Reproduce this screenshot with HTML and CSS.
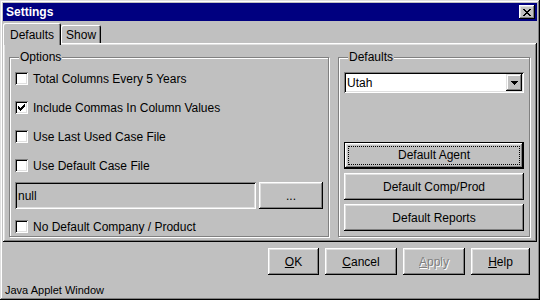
FILE: index.html
```html
<!DOCTYPE html>
<html lang="en">
<head>
  <meta charset="UTF-8" />
  <title>Settings</title>
  <link rel="stylesheet" href="styles.css">
</head>
<body>
  <div class="window">
    <div class="titlebar">
      <span class="title">Settings</span>
      <button class="close">
        <svg width="8" height="7" viewBox="0 0 8 7" shape-rendering="crispEdges"><path d="M0 0h2v1H0z M6 0h2v1H6z M1 1h2v1H1z M5 1h2v1H5z M2 2h4v1H2z M3 3h2v1H3z M2 4h4v1H2z M1 5h2v1H1z M5 5h2v1H5z M0 6h2v1H0z M6 6h2v1H6z" fill="#000"/></svg>
      </button>
    </div>

    <div class="tabs">
      <div class="tab active">Defaults</div>
      <div class="tab">Show</div>
    </div>

    <div class="panel">
      <fieldset class="group options">
        <legend>Options</legend>
        <label class="check-row"><span class="check"></span>Total Columns Every 5 Years</label>
        <label class="check-row">
          <span class="check">
            <svg width="7" height="7" viewBox="0 0 7 7" shape-rendering="crispEdges"><path d="M6 0h1v1H6z M5 1h2v1H5z M0 2h1v1H0z M4 2h3v1H4z M0 3h2v1H0z M3 3h3v1H3z M0 4h5v1H0z M1 5h3v1H1z M2 6h1v1H2z" fill="#000"/></svg>
          </span>Include Commas In Column Values
        </label>
        <label class="check-row"><span class="check"></span>Use Last Used Case File</label>
        <label class="check-row"><span class="check"></span>Use Default Case File</label>
        <div class="file-row">
          <div class="field">null</div>
          <button class="btn browse">...</button>
        </div>
        <label class="check-row last"><span class="check"></span>No Default Company / Product</label>
      </fieldset>

      <fieldset class="group defaults">
        <legend>Defaults</legend>
        <div class="combo">
          <span class="combo-value">Utah</span>
          <span class="drop">
            <svg width="7" height="4" viewBox="0 0 7 4" shape-rendering="crispEdges"><path d="M0 0h7v1H0z M1 1h5v1H1z M2 2h3v1H2z M3 3h1v1H3z" fill="#000"/></svg>
          </span>
        </div>
        <div class="default-buttons">
          <button class="btn wide default"><span class="focus">Default Agent</span></button>
          <button class="btn wide">Default Comp/Prod</button>
          <button class="btn wide">Default Reports</button>
        </div>
      </fieldset>
    </div>

    <div class="actions">
      <button class="btn ok"><u>O</u>K</button>
      <button class="btn cancel"><u>C</u>ancel</button>
      <button class="btn apply" disabled><u>A</u>pply</button>
      <button class="btn help"><u>H</u>elp</button>
    </div>

    <div class="status">Java Applet Window</div>
  </div>
</body>
</html>
```

FILE: styles.css
```css
:root {
  --face: #c0c0c0;
  --shadow: #808080;
  --light: #dfdfdf;
  --title: #000080;
}

* {
  box-sizing: border-box;
}

body {
  margin: 0;
  background: var(--face);
  font-family: 'Liberation Sans', Arial, sans-serif;
  font-size: 12px;
  color: #000;
}

.window {
  width: 540px;
  height: 300px;
  padding: 3px;
  background: var(--face);
  box-shadow: inset -1px -1px #000, inset 1px 1px var(--light),
              inset -2px -2px var(--shadow), inset 2px 2px #fff;
}

/* title bar */
.titlebar {
  height: 18px;
  background: var(--title);
  display: flex;
  align-items: center;
  padding: 0 2px 0 3px;
}

.title {
  color: #fff;
  font-weight: bold;
}

.close {
  margin-left: auto;
  width: 16px;
  height: 14px;
  padding: 0;
  border: none;
  background: var(--face);
  display: flex;
  align-items: center;
  justify-content: center;
  box-shadow: inset -1px -1px #000, inset 1px 1px #fff,
              inset -2px -2px var(--shadow), inset 2px 2px var(--light);
}

/* tabs */
.tabs {
  height: 22px;
  display: flex;
  align-items: flex-end;
}

.tab {
  height: 18px;
  padding: 3px 5px 0;
  background: var(--face);
  border-radius: 2px 2px 0 0;
  box-shadow: inset 1px 1px #fff, inset -1px 0 #000, inset -2px 0 var(--shadow);
}

.tab.active {
  height: 22px;
  margin-bottom: -2px;
  padding: 5px 7px 0;
  position: relative;
  z-index: 1;
}

.panel {
  height: 199px;
  display: flex;
  gap: 9px;
  padding: 7px 7px 5px 6px;
  box-shadow: inset -1px -1px #000, inset 1px 1px #fff,
              inset -2px -2px var(--shadow), inset 2px 2px var(--light);
}

/* group boxes */
.group {
  margin: 0;
  padding: 0 5px 5px;
  min-width: 0;
  border: 1px solid var(--shadow);
  box-shadow: inset 1px 1px #fff, 1px 1px #fff;
  display: flex;
  flex-direction: column;
}

.group legend {
  margin-left: 4px;
  padding: 0 1px;
  line-height: 14px;
  background: var(--face);
}

.options {
  width: 320px;
  padding-bottom: 0;
}

.defaults {
  width: 192px;
}

.check-row {
  flex: none;
  height: 29px;
  display: flex;
  align-items: center;
  gap: 5px;
}

.check-row.last {
  height: 17px;
  margin-top: 9px;
}

.check {
  width: 13px;
  height: 13px;
  flex: none;
  background: #fff;
  display: flex;
  align-items: center;
  justify-content: center;
  box-shadow: inset 1px 1px var(--shadow), inset -1px -1px #fff,
              inset 2px 2px #000, inset -2px -2px var(--light);
}

.file-row {
  flex: none;
  margin-top: 2px;
  height: 27px;
  display: flex;
  gap: 3px;
}

.field {
  flex: 1;
  padding-left: 3px;
  display: flex;
  align-items: center;
  box-shadow: inset 1px 1px var(--shadow), inset -1px -1px #fff,
              inset 2px 2px #000, inset -2px -2px var(--light);
}

/* buttons */
.btn {
  height: 27px;
  padding: 0;
  border: none;
  background: var(--face);
  font-family: inherit;
  font-size: 12px;
  color: #000;
  box-shadow: inset -1px -1px #000, inset 1px 1px #fff,
              inset -2px -2px var(--shadow), inset 2px 2px var(--light);
}

.browse {
  width: 64px;
}

.combo {
  flex: none;
  margin-top: 8px;
  height: 21px;
  background: #fff;
  display: flex;
  align-items: center;
  box-shadow: inset 1px 1px var(--shadow), inset -1px -1px #fff,
              inset 2px 2px #000, inset -2px -2px var(--light);
}

.combo-value {
  flex: 1;
  padding-left: 3px;
}

.drop {
  width: 16px;
  height: 17px;
  margin-right: 2px;
  background: var(--face);
  display: flex;
  align-items: center;
  justify-content: center;
  box-shadow: inset -1px -1px #000, inset 1px 1px var(--light),
              inset -2px -2px var(--shadow), inset 2px 2px #fff;
}

.default-buttons {
  flex: none;
  margin-top: auto;
  display: flex;
  flex-direction: column;
  gap: 4px;
}

.btn.wide {
  width: 180px;
}

.btn.default {
  padding: 4px;
  box-shadow: inset 0 0 0 1px #000, inset -2px -2px #000, inset 2px 2px #fff,
              inset -3px -3px var(--shadow), inset 3px 3px var(--light);
}

.focus {
  display: block;
  line-height: 17px;
  border: 1px dotted #000;
}

.actions {
  margin-top: 6px;
  padding-right: 7px;
  display: flex;
  justify-content: flex-end;
  gap: 6px;
}

.ok { width: 51px; }
.cancel { width: 72px; }
.apply { width: 62px; }
.help { width: 59px; }

.btn:disabled {
  color: var(--shadow);
  text-shadow: 1px 1px #fff;
}

.status {
  margin-top: 9px;
  padding-left: 2px;
  font-size: 11px;
}
```
